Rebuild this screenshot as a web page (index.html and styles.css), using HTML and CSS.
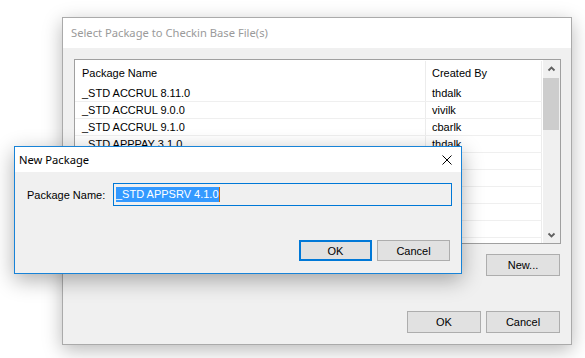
FILE: index.html
```html
<!DOCTYPE html>
<html>
<head>
    <title>Select Package</title>
    <link rel="stylesheet" href="styles.css">
</head>
<body>
    <!-- Back dialog -->
    <div class="window back">
        <div class="titlebar inactive">Select Package to Checkin Base File(s)</div>
        <div class="client">
            <div class="listview">
                <div class="lv-grid">
                    <div class="lv-header">
                        <div class="cell name">Package Name</div>
                        <div class="cell by">Created By</div>
                    </div>
                    <div class="lv-row"><div class="cell name">_STD ACCRUL 8.11.0</div><div class="cell by">thdalk</div></div>
                    <div class="lv-row"><div class="cell name">_STD ACCRUL 9.0.0</div><div class="cell by">vivilk</div></div>
                    <div class="lv-row"><div class="cell name">_STD ACCRUL 9.1.0</div><div class="cell by">cbarlk</div></div>
                    <div class="lv-row"><div class="cell name">_STD APPPAY 3.1.0</div><div class="cell by">thdalk</div></div>
                    <div class="lv-row"><div class="cell name"></div><div class="cell by"></div></div>
                    <div class="lv-row"><div class="cell name"></div><div class="cell by"></div></div>
                    <div class="lv-row"><div class="cell name"></div><div class="cell by"></div></div>
                    <div class="lv-row"><div class="cell name"></div><div class="cell by"></div></div>
                    <div class="lv-row"><div class="cell name"></div><div class="cell by"></div></div>
                    <div class="lv-row"><div class="cell name"></div><div class="cell by"></div></div>
                </div>
                <div class="vscroll">
                    <div class="sb-btn">
                        <svg width="9" height="6" viewBox="0 0 9 6"><path d="M1.5 4.5 L4.5 1.5 L7.5 4.5" fill="none" stroke="#606060" stroke-width="1.8"/></svg>
                    </div>
                    <div class="sb-thumb"></div>
                    <div class="sb-track"></div>
                    <div class="sb-btn">
                        <svg width="9" height="6" viewBox="0 0 9 6"><path d="M1.5 1.5 L4.5 4.5 L7.5 1.5" fill="none" stroke="#606060" stroke-width="1.8"/></svg>
                    </div>
                </div>
            </div>
            <div class="btn-row">
                <button class="btn">New...</button>
            </div>
            <div class="btn-row">
                <button class="btn">OK</button>
                <button class="btn">Cancel</button>
            </div>
        </div>
    </div>

    <!-- Front dialog -->
    <div class="window front">
        <div class="titlebar">
            <span class="title-text">New Package</span>
            <svg class="close" width="10" height="10" viewBox="0 0 10 10"><path d="M0.5 0.5 L9.5 9.5 M9.5 0.5 L0.5 9.5" stroke="#000" stroke-width="1"/></svg>
        </div>
        <div class="client small">
            <div class="field">
                <label class="field-label">Package Name:</label>
                <div class="textbox"><span class="selected">_STD APPSRV 4.1.0</span><span class="caret"></span></div>
            </div>
            <div class="btn-row tight">
                <button class="btn sm default">OK</button>
                <button class="btn sm">Cancel</button>
            </div>
        </div>
    </div>
</body>
</html>
```

FILE: styles.css
```css
body { margin: 0; width: 585px; height: 358px; background: #fff; overflow: hidden;
       font-family: "Liberation Sans", Arial, sans-serif; font-size: 11px; color: #000; }

.window { position: absolute; box-sizing: border-box; display: flex; flex-direction: column; }
.back { left: 62px; top: 17px; width: 510px; height: 328px; border: 1px solid #aaaaaa;
        box-shadow: 0 5px 18px rgba(0,0,0,0.28); }
.front { left: 14px; top: 146px; width: 448px; height: 128px; border: 1px solid #1883d7;
         box-shadow: 0 6px 20px rgba(0,0,0,0.32); }

.titlebar { background: #fff; height: 30px; line-height: 30px; padding-left: 8px;
            font-family: "Noto Sans", sans-serif; font-size: 11.2px; flex: none; }
.titlebar.inactive { color: #9a9a9a; }
.front .titlebar { height: 25px; line-height: 25px; padding-left: 4px; display: flex;
                   align-items: center; justify-content: space-between; }
.close { margin-right: 9px; }

.client { flex: 1; background: #f0f0f0; padding: 11px 10px 11px 11px;
          display: flex; flex-direction: column; }
.client.small { padding: 11px 9px 12px 12px; justify-content: space-between; }

/* list view */
.listview { height: 185px; box-sizing: border-box; border: 1px solid #a0a0a0; background: #fff;
            display: flex; flex: none; }
.lv-grid { flex: 1; overflow: hidden; }
.lv-header, .lv-row { display: flex; }
.lv-header { height: 25px; line-height: 25px; }
.lv-row { height: 17px; line-height: 16px; box-sizing: border-box; border-bottom: 1px solid #efefef;
          width: 467px; }
.cell { box-sizing: border-box; border-right: 1px solid #ececec; white-space: nowrap; overflow: hidden; }
.cell.name { width: 351px; padding-left: 7px; }
.cell.by { width: 116px; padding-left: 6px; }
.lv-header .cell { height: 24px; margin-top: 1px; line-height: 24px; }

.vscroll { width: 17px; background: #f0f0f0; display: flex; flex-direction: column; }
.sb-btn { height: 17px; display: flex; align-items: center; justify-content: center; flex: none; }
.sb-thumb { height: 52px; margin: 1px 1px 0 0; background: #cdcdcd; flex: none; }
.sb-track { flex: 1; }

/* buttons */
.btn-row { display: flex; justify-content: flex-end; gap: 5px; padding-right: 1px; margin-top: 10px; }
.btn-row:last-child { margin-top: auto; }
.btn-row.tight { padding-right: 2px; margin-top: 0; }
.btn { width: 74px; height: 22px; box-sizing: border-box; border: 1px solid #adadad; background: #e1e1e1;
       font-family: "Liberation Sans", Arial, sans-serif; font-size: 11px; color: #000; padding: 0; }
.btn.sm { width: 73px; height: 21px; }
.btn.default { border: 2px solid #0078d7; }

/* text field */
.field { display: flex; align-items: center; }
.field-label { width: 86px; flex: none; }
.textbox { flex: 1; height: 23px; box-sizing: border-box; border: 1px solid #0078d7; background: #f0f0f0;
           display: flex; align-items: center; padding-left: 2px; }
.selected { background: #3399ff; color: #fff; line-height: 15px; }
.caret { width: 1px; height: 15px; background: #cc6600; }
```
